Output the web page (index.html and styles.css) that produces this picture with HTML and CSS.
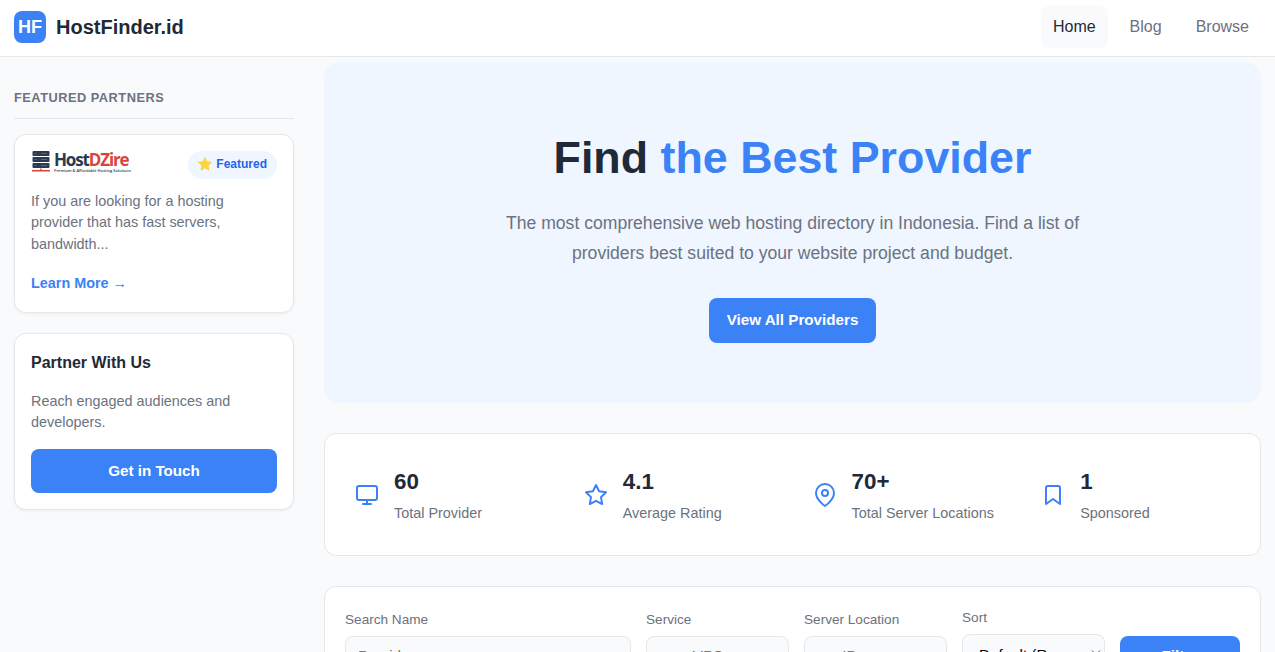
FILE: index.html
```html
<!DOCTYPE html>
<html lang="en">
<head>
    <meta charset="UTF-8">
    <meta name="viewport" content="width=device-width, initial-scale=1.0">
    <title>HostFinder.id</title>
    <link rel="stylesheet" href="styles.css">
</head>
<body>
    <header class="header">
        <a class="brand" href="#">
            <span class="brand-logo">HF</span>
            <span class="brand-name">HostFinder.id</span>
        </a>
        <nav class="nav">
            <a class="nav-link active" href="#">Home</a>
            <a class="nav-link" href="#">Blog</a>
            <a class="nav-link" href="#">Browse</a>
        </nav>
    </header>

    <div class="layout">
        <aside class="sidebar">
            <h2 class="sidebar-title">Featured Partners</h2>

            <div class="card partner">
                <div class="partner-head">
                    <div class="partner-logo">
                        <svg width="20" height="22" viewBox="0 0 20 22">
                            <g fill="#2b3a50">
                                <rect x="1.5" y="0" width="17" height="5" rx="1"/>
                                <rect x="1.5" y="6" width="17" height="5" rx="1"/>
                                <rect x="1.5" y="12" width="17" height="5" rx="1"/>
                            </g>
                            <path d="M3.5 2.5h2M10 2.5h6M3.5 8.5h2M10 8.5h6M3.5 14.5h2M10 14.5h6" stroke="#8b5560" stroke-width="1"/>
                            <path d="M1 19.8h18M10 17.5v2.3" stroke="#d9453d" stroke-width="1.4"/>
                        </svg>
                        <div class="partner-words">
                            <div class="partner-name">Host<span>DZire</span></div>
                            <div class="partner-tag">Premium &amp; Affordable Hosting Solutions</div>
                        </div>
                    </div>
                    <span class="badge">
                        <svg width="14" height="14" viewBox="0 0 24 24"><path d="M12 1l3.3 7.3 7.9.9-5.9 5.4 1.6 7.9L12 18.6l-6.9 3.9 1.6-7.9L.8 9.2l7.9-.9z" fill="#fcd834" stroke="#f5c53b" stroke-linejoin="round"/></svg>
                        Featured
                    </span>
                </div>
                <p class="card-text">If you are looking for a hosting provider that has fast servers, bandwidth...</p>
                <a class="learn-more" href="#">Learn More →</a>
            </div>

            <div class="card contact">
                <h3 class="contact-title">Partner With Us</h3>
                <p class="card-text">Reach engaged audiences and developers.</p>
                <a class="btn btn-block" href="#">Get in Touch</a>
            </div>
        </aside>

        <main class="main">
            <section class="hero">
                <h1 class="hero-title">Find <span>the Best Provider</span></h1>
                <p class="hero-text">The most comprehensive web hosting directory in Indonesia. Find a list of providers best suited to your website project and budget.</p>
                <a class="btn" href="#">View All Providers</a>
            </section>

            <section class="stats">
                <div class="stat">
                    <svg class="icon" viewBox="0 0 24 24"><rect x="2" y="3" width="20" height="14" rx="2"/><path d="M8 21h8M12 17v4"/></svg>
                    <div>
                        <div class="stat-value">60</div>
                        <div class="stat-label">Total Provider</div>
                    </div>
                </div>
                <div class="stat">
                    <svg class="icon" viewBox="0 0 24 24"><path d="M12 2l3.09 6.26L22 9.27l-5 4.87 1.18 6.88L12 17.77l-6.18 3.25L7 14.14 2 9.27l6.91-1.01L12 2z"/></svg>
                    <div>
                        <div class="stat-value">4.1</div>
                        <div class="stat-label">Average Rating</div>
                    </div>
                </div>
                <div class="stat">
                    <svg class="icon" viewBox="0 0 24 24"><path d="M21 10c0 7-9 13-9 13s-9-6-9-13a9 9 0 0 1 18 0z"/><circle cx="12" cy="10" r="3"/></svg>
                    <div>
                        <div class="stat-value">70+</div>
                        <div class="stat-label">Total Server Locations</div>
                    </div>
                </div>
                <div class="stat">
                    <svg class="icon" viewBox="0 0 24 24"><path d="M19 21l-7-5-7 5V5a2 2 0 0 1 2-2h10a2 2 0 0 1 2 2z"/></svg>
                    <div>
                        <div class="stat-value">1</div>
                        <div class="stat-label">Sponsored</div>
                    </div>
                </div>
            </section>

            <form class="filter">
                <div class="field">
                    <label for="name">Search Name</label>
                    <input id="name" type="text" placeholder="Provider name...">
                </div>
                <div class="field">
                    <label for="service">Service</label>
                    <input id="service" type="text" placeholder="e.g., VPS">
                </div>
                <div class="field">
                    <label for="location">Server Location</label>
                    <input id="location" type="text" placeholder="e.g ID">
                </div>
                <div class="field">
                    <label for="sort">Sort</label>
                    <div class="select" id="sort">
                        <span>Default (Recommended)</span>
                        <svg width="10" height="6" viewBox="0 0 10 6"><path d="M1 .5l4 4 4-4"/></svg>
                    </div>
                </div>
                <button class="btn btn-filter" type="button">Filter</button>
            </form>
        </main>
    </div>
</body>
</html>
```
FILE: styles.css
```css
* {
    box-sizing: border-box;
    margin: 0;
    padding: 0;
}
body {
    font-family: "Liberation Sans", Arial, sans-serif;
    font-size: 16px;
    line-height: 1.6;
    color: #1f2937;
    background: #f9fafb;
    height: 652px;
    overflow: hidden;
}
a {
    text-decoration: none;
}
.header {
    display: flex;
    align-items: center;
    justify-content: space-between;
    height: 57px;
    padding: 0 14px 2px;
    background: #fff;
    border-bottom: 1px solid #e5e7eb;
}
.brand {
    display: flex;
    align-items: center;
    gap: 10px;
    color: #1f2937;
    font-size: 20px;
    font-weight: bold;
}
.brand-logo {
    width: 32px;
    height: 32px;
    border-radius: 8px;
    background: #3b82f6;
    color: #fff;
    font-size: 18px;
    line-height: 32px;
    text-align: center;
}
.nav {
    display: flex;
    gap: 10px;
}
.nav-link {
    padding: 8px 12px;
    border-radius: 8px;
    color: #6b7280;
}
.nav-link.active {
    background: #f9fafb;
    color: #1f2937;
}
.layout {
    display: grid;
    grid-template-columns: 280px 1fr;
    gap: 30px;
    padding: 5px 14px 0;
}
.sidebar-title {
    margin-top: 20px;
    margin-bottom: 15px;
    padding: 6px 0 10px;
    border-bottom: 1px solid #e5e7eb;
    color: #6b7280;
    font-size: 12.8px;
    letter-spacing: 0.5px;
    line-height: 20px;
    text-transform: uppercase;
}
.card {
    padding: 16px;
    background: #fff;
    border: 1px solid #e5e7eb;
    border-radius: 12px;
    box-shadow: 0 1px 3px rgba(0,0,0,0.06);
}
.partner {
    height: 179px;
    margin-bottom: 20px;
}
.partner-head {
    display: flex;
    justify-content: space-between;
    height: 28px;
    margin-bottom: 11.6px;
}
.partner-logo {
    display: flex;
    gap: 3px;
}
.partner-name {
    color: #2b3a50;
    font-family: "Open Sans", sans-serif;
    font-size: 17px;
    font-weight: 700;
    letter-spacing: -1.15px;
    line-height: 17px;
}
.partner-name span {
    color: #d9453d;
}
.partner-tag {
    color: #2b3a50;
    font-family: "Open Sans", sans-serif;
    font-size: 3.95px;
    font-weight: 600;
    line-height: 5px;
    white-space: nowrap;
}
.badge {
    display: flex;
    align-items: center;
    gap: 4px;
    height: 28px;
    padding: 0 10px 3px;
    border-radius: 14px;
    background: #eff6ff;
    color: #2563eb;
    font-size: 12px;
    font-weight: bold;
    line-height: 20px;
}
.card-text {
    color: #6b7280;
    font-size: 14.4px;
    line-height: 21.6px;
}
.learn-more {
    display: block;
    margin-top: 16.4px;
    color: #3b82f6;
    font-size: 14.4px;
    font-weight: bold;
}
.contact {
    height: 177px;
}
.contact-title {
    margin-bottom: 15.6px;
    font-size: 16px;
    line-height: 25px;
}
.btn {
    display: inline-block;
    height: 45px;
    padding: 0 18px;
    border: none;
    border-radius: 8px;
    background: #3b82f6;
    color: #fff;
    font-family: inherit;
    font-size: 15.2px;
    font-weight: bold;
    line-height: 44px;
    text-align: center;
}
.btn-block {
    display: block;
    height: 44px;
    margin-top: 15.2px;
}
.hero {
    height: 341px;
    padding: 59px 30px;
    border-radius: 16px;
    background: #eff6ff;
    text-align: center;
}
.hero-title {
    margin-bottom: 20px;
    font-size: 44.8px;
    line-height: 72px;
}
.hero-title span {
    color: #3b82f6;
}
.hero-text {
    max-width: 600px;
    margin: -5px auto 30px;
    color: #6b7280;
    font-size: 17.6px;
    line-height: 30px;
}
.stats {
    display: grid;
    grid-template-columns: repeat(4, 1fr);
    gap: 40px;
    height: 123px;
    margin: 30px 0;
    padding: 30px;
    background: #fff;
    border: 1px solid #e5e7eb;
    border-radius: 12px;
}
.stat {
    display: flex;
    align-items: center;
    gap: 15px;
    white-space: nowrap;
}
.icon {
    width: 24px;
    height: 24px;
    flex-shrink: 0;
    fill: none;
    stroke: #3b82f6;
    stroke-width: 2;
    stroke-linecap: round;
    stroke-linejoin: round;
}
.stat-value {
    font-size: 22.4px;
    font-weight: bold;
    line-height: 36px;
}
.stat-label {
    color: #6b7280;
    font-size: 14.4px;
    line-height: 26px;
}
.filter {
    display: grid;
    grid-template-columns: 2fr 1fr 1fr 1fr 120px;
    gap: 15px;
    align-items: end;
    padding: 20px;
    background: #fff;
    border: 1px solid #e5e7eb;
    border-radius: 12px;
}
.field {
    min-width: 0;
}
.field label {
    display: block;
    margin-bottom: 5px;
    color: #6b7280;
    font-size: 13.6px;
    line-height: 22px;
}
.field input,
.select {
    width: 100%;
    height: 39px;
    padding: 0 12px;
    border: 1px solid #e5e7eb;
    border-radius: 8px;
    background: #f9fafb;
    font-family: inherit;
    font-size: 15.2px;
}
.select {
    display: flex;
    align-items: center;
    gap: 44px;
    height: 41px;
    padding: 1px 3px 0 16px;
    color: #000;
}
.select span {
    flex: 1;
    overflow: hidden;
    white-space: nowrap;
}
.select svg {
    flex-shrink: 0;
    margin-bottom: 4px;
    fill: none;
    stroke: #4b5563;
}
.btn-filter {
    height: 39px;
    line-height: 39px;
}
```
